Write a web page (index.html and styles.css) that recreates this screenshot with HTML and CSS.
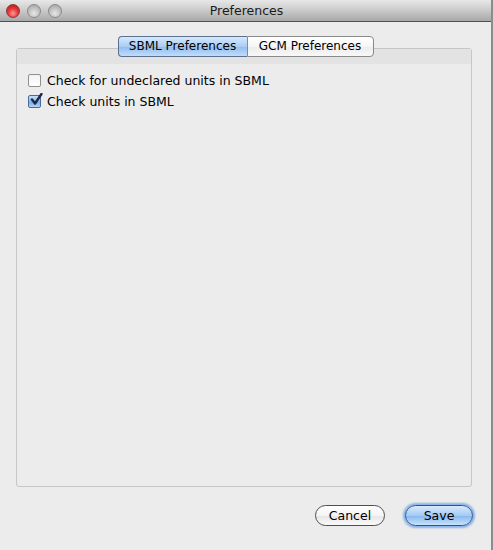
FILE: index.html
```html
<!DOCTYPE html>
<html>
<head>
<meta charset="utf-8">
<link rel="stylesheet" href="styles.css">
</head>
<body>
<div class="window">
  <div class="titlebar">
    <div class="lights">
      <span class="light red"></span>
      <span class="light gray"></span>
      <span class="light gray"></span>
    </div>
    <div class="title">Preferences</div>
  </div>
  <div class="content">
    <div class="tabs">
      <div class="tab active">SBML Preferences</div>
      <div class="tab">GCM Preferences</div>
    </div>
    <div class="panel">
      <div class="panel-strip"></div>
      <div class="options">
        <label class="option">
          <span class="check"></span>
          <span class="label">Check for undeclared units in SBML</span>
        </label>
        <label class="option">
          <span class="check checked">
            <svg width="14" height="14" viewBox="0 0 14 14"><path d="M3 6.5 L6 10.5 L12.5 1" fill="none" stroke="#1b2a4a" stroke-width="2.4" stroke-linecap="round" stroke-linejoin="round"/></svg>
          </span>
          <span class="label">Check units in SBML</span>
        </label>
      </div>
    </div>
    <div class="buttons">
      <button class="btn">Cancel</button>
      <button class="btn default">Save</button>
    </div>
  </div>
</div>
</body>
</html>
```
FILE: styles.css
```css
html, body {
  margin: 0;
  padding: 0;
  background: #ececec;
}
body {
  width: 493px;
  height: 550px;
  overflow: hidden;
  font-family: "DejaVu Sans", "Liberation Sans", sans-serif;
  font-size: 12px;
  color: #000;
}
.window {
  width: 493px;
  height: 550px;
  box-sizing: border-box;
  display: flex;
  flex-direction: column;
  background: #ececec;
  border-right: 2px solid #8c8c8c;
}
.titlebar {
  height: 21px;
  flex: none;
  border-bottom: 1px solid #515151;
  background: linear-gradient(#e8e8e8, #d0d0d0 40%, #a8a8a8);
  display: flex;
  align-items: center;
  position: relative;
}
.lights {
  display: flex;
  gap: 7px;
  padding-left: 6px;
}
.light {
  width: 14px;
  height: 14px;
  border-radius: 50%;
  box-sizing: border-box;
}
.light.red {
  background: radial-gradient(circle at 50% 70%, #ff9a9a 0%, #e8393a 45%, #a81010 100%);
  border: 1px solid #8a3a3a;
}
.light.gray {
  background: radial-gradient(circle at 50% 70%, #e6e6e6 0%, #c2c2c2 50%, #9c9c9c 100%);
  border: 1px solid #8a8a8a;
}
.title {
  position: absolute;
  left: 0;
  right: 0;
  top: 0;
  bottom: 0;
  display: flex;
  align-items: center;
  justify-content: center;
  font-size: 12.5px;
  color: #1a1a1a;
  padding-left: 2px;
}
.content {
  flex: 1;
  display: flex;
  flex-direction: column;
  padding: 14px 19px 0 16px;
}
.tabs {
  display: flex;
  justify-content: center;
  position: relative;
  z-index: 1;
  padding-left: 3px;
}
.tab {
  height: 19px;
  line-height: 19px;
  width: 125px;
  text-align: center;
  border: 1px solid #8a8a8a;
  background: linear-gradient(#ffffff, #f6f6f6 50%, #ececec 52%, #f8f8f8);
  font-size: 12px;
}
.tab:first-child {
  border-radius: 4px 0 0 4px;
  border-right: none;
}
.tab:last-child {
  border-radius: 0 4px 4px 0;
}
.tab.active {
  background: linear-gradient(#d6e8fb, #a9cdf4 50%, #8fbdf0 52%, #c2ddf9);
  border-color: #5b6f8e;
  width: 128px;
}
.panel {
  margin-top: -9px;
  height: 439px;
  flex: none;
  box-sizing: border-box;
  border: 1px solid #c6c6c6;
  border-radius: 3px;
  background: #ececec;
  display: flex;
  flex-direction: column;
}
.panel-strip {
  height: 15px;
  background: #e3e3e3;
  flex: none;
}
.options {
  display: flex;
  flex-direction: column;
  gap: 8px;
  padding: 10px 0 0 11px;
}
.option {
  display: flex;
  align-items: center;
  gap: 6px;
  height: 13px;
  font-size: 12.5px;
}
.check {
  width: 13px;
  height: 13px;
  box-sizing: border-box;
  border: 1px solid #8f8f8f;
  border-radius: 2px;
  background: linear-gradient(#f2f2f2, #ffffff);
  position: relative;
  flex: none;
}
.check.checked {
  border-color: #4c6a96;
  background: linear-gradient(#c9e0f8, #8ab8ec 50%, #73a9e6 52%, #b2d3f6);
}
.check svg {
  position: absolute;
  left: 0;
  top: -3px;
}
.buttons {
  display: flex;
  justify-content: flex-end;
  align-items: center;
  gap: 20px;
  padding: 18px 0 0 0;
}
.btn {
  font-family: inherit;
  font-size: 12.5px;
  width: 70px;
  height: 21px;
  padding: 0;
  border-radius: 11px;
  border: 1px solid #4e4e4e;
  background: linear-gradient(#ffffff, #f4f4f4 50%, #e6e6e6 52%, #fafafa);
  color: #000;
  margin: 0;
}
.btn.default {
  width: 68px;
  margin-right: -1px;
  border-color: #30538a;
  background: linear-gradient(#d8eafc, #a4cbf5 50%, #86b8f0 52%, #c8e2fb);
  box-shadow: 0 0 2px 2px rgba(104, 160, 230, 0.75);
}
```
